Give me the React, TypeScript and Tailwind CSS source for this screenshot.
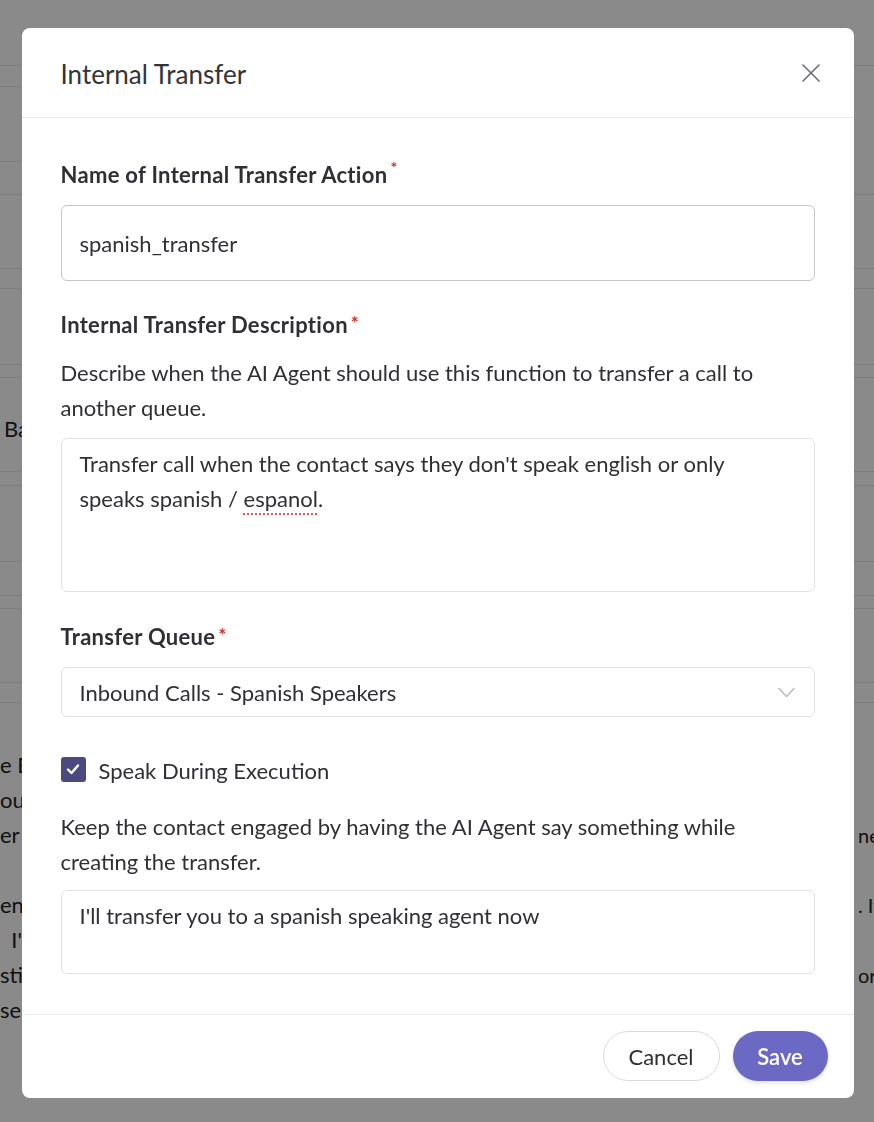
import React from 'react';

const Asterisk = () => (
    <span className="ml-[3px] text-[19px] leading-none text-[#c8322c] relative top-[2px]">*</span>
);

const CloseIcon = () => (
    <svg width="18" height="18" viewBox="0 0 18 18" fill="none" stroke="#6b6b73" strokeWidth="1.6" strokeLinecap="round">
        <path d="M1 1 L17 17" />
        <path d="M17 1 L1 17" />
    </svg>
);

const Chevron = () => (
    <svg width="17" height="11" viewBox="0 0 17 11" fill="none" stroke="#b8b8bc" strokeWidth="1.4" strokeLinecap="round" strokeLinejoin="round">
        <path d="M1 1.5 L8.5 9.5 L16 1.5" />
    </svg>
);

// page behind the dialog
const Backdrop = () => (
    <div className="flex flex-col text-[22px] text-[#222] whitespace-nowrap">
        <div className="h-[65px]" />
        <div className="h-[21px] border-t border-[#e6e6e6]" />
        <div className="h-[75px] w-1/2 border-t border-[#e6e6e6]" />
        <div className="h-[33px] w-1/2 border-t border-[#e6e6e6]" />
        <div className="h-[74px] border-t border-[#e6e6e6]" />
        <div className="h-[20px] border-t border-[#e6e6e6]" />
        <div className="h-[76px] border-t border-[#e6e6e6]" />
        <div className="h-[13px] border-t border-[#e6e6e6]" />
        <div className="h-[94px] border-t border-[#e6e6e6] flex items-center pt-[8px]">
            <span className="pl-[4px]">Batch</span>
        </div>
        <div className="h-[14px] border-t border-[#e6e6e6]" />
        <div className="h-[76px] border-t border-[#e6e6e6]" />
        <div className="h-[34px] border-t border-[#e6e6e6]" />
        <div className="h-[13px] border-t border-[#e6e6e6]" />
        <div className="h-[74px] border-t border-[#e6e6e6]" />
        <div className="h-[20px] border-t border-[#e6e6e6]" />
        <div className="h-[45px] border-t border-[#e6e6e6]" />
        {[
            ['e Bot', ''],
            ['ou', ''],
            ['er', 'ne'],
            ['', ''],
            ['eni', '. If'],
            ['  I\'ll', ''],
            ['sti', 'or'],
            ['se s', ''],
        ].map(([l, r], i) => (
            <div key={i} className="h-[35px] flex items-center justify-between">
                <span className="whitespace-pre">{l}</span>
                <span className="w-[16px] text-[20px] overflow-hidden">{r}</span>
            </div>
        ))}
    </div>
);

export default function App() {
    return (
        <div className="relative h-[1122px] overflow-hidden bg-white font-[Lato,sans-serif]">
            <Backdrop />

            <div className="fixed inset-0 bg-black/[0.46] flex justify-center items-start pt-[28px] pl-[1px]">
                <div className="w-[832px] bg-white rounded-[8px] flex flex-col text-[#2f2f36]">
                    <div className="h-[90px] flex items-center justify-between pl-[39px] pr-[34px] border-b border-[#ececee]">
                        <h2 className="pt-[4px] text-[26px] text-[#33333a]">Internal Transfer</h2>
                        <button className="p-0"><CloseIcon /></button>
                    </div>

                    <div className="flex flex-col px-[39px] pt-[43px] pb-[40px] border-b border-[#ececee]">
                        <label className="text-[22px] leading-[28px] font-bold tracking-[0.3px] flex items-start">
                            Name of Internal Transfer Action<span className="ml-[3px] text-[16px] leading-none text-[#c8322c] relative -top-[2px]">*</span>
                        </label>
                        <div className="mt-[16px] h-[76px] border border-[#c6c6ca] rounded-[6px] flex items-center px-[18px] text-[22px]">
                            spanish_transfer
                        </div>

                        <label className="mt-[30px] text-[22px] leading-[28px] font-bold tracking-[0.3px] flex items-start">
                            Internal Transfer Description<Asterisk />
                        </label>
                        <p className="mt-[16px] text-[22px] leading-[35px]">
                            Describe when the AI Agent should use this function to transfer a call to
                            <br />
                            another queue.
                        </p>
                        <div className="mt-[13px] h-[154px] border border-[#e2e2e6] rounded-[6px] px-[18px] pt-[7px] text-[22px] leading-[35px]">
                            Transfer call when the contact says they don't speak english or only
                            <br />
                            speaks spanish /{' '}
                            <span className="underline decoration-dotted decoration-[#e0594c] decoration-2 underline-offset-[6px]">espanol</span>.
                        </div>

                        <label className="mt-[31px] text-[22px] leading-[28px] font-bold tracking-[0.3px] flex items-start">
                            Transfer Queue<Asterisk />
                        </label>
                        <div className="mt-[16px] h-[50px] border border-[#e2e2e6] rounded-[6px] flex items-center justify-between pl-[18px] pr-[19px] text-[22px]">
                            <span>Inbound Calls - Spanish Speakers</span>
                            <Chevron />
                        </div>

                        <div className="mt-[39px] h-[26px] flex items-center gap-[13px]">
                            <span className="w-[25px] h-[25px] rounded-[3px] bg-[#4b4a80] flex items-center justify-center">
                                <svg width="16" height="16" viewBox="0 0 16 16" fill="none" stroke="white" strokeWidth="2.4" strokeLinecap="round" strokeLinejoin="round">
                                    <path d="M3 8.5 L6.5 12 L13 4.5" />
                                </svg>
                            </span>
                            <span className="pt-[3px] text-[22px] leading-[26px]">Speak During Execution</span>
                        </div>

                        <p className="mt-[27px] text-[22px] leading-[35px]">
                            Keep the contact engaged by having the AI Agent say something while
                            <br />
                            creating the transfer.
                        </p>
                        <div className="mt-[11px] h-[84px] border border-[#e2e2e6] rounded-[6px] px-[18px] pt-[7px] text-[22px] leading-[35px]">
                            I'll transfer you to a spanish speaking agent now
                        </div>
                    </div>

                    <div className="flex justify-end items-center gap-[13px] pt-[16px] pb-[17px] pr-[26px]">
                        <button className="w-[117px] h-[50px] rounded-full border border-[#d9d9dd] text-[22px] text-[#2f2f36]">
                            Cancel
                        </button>
                        <button className="w-[95px] h-[50px] rounded-full bg-[#6b69c3] text-[22px] font-semibold text-white shadow-[0_2px_4px_rgba(0,0,0,0.12)]">
                            Save
                        </button>
                    </div>
                </div>
            </div>
        </div>
    );
}
